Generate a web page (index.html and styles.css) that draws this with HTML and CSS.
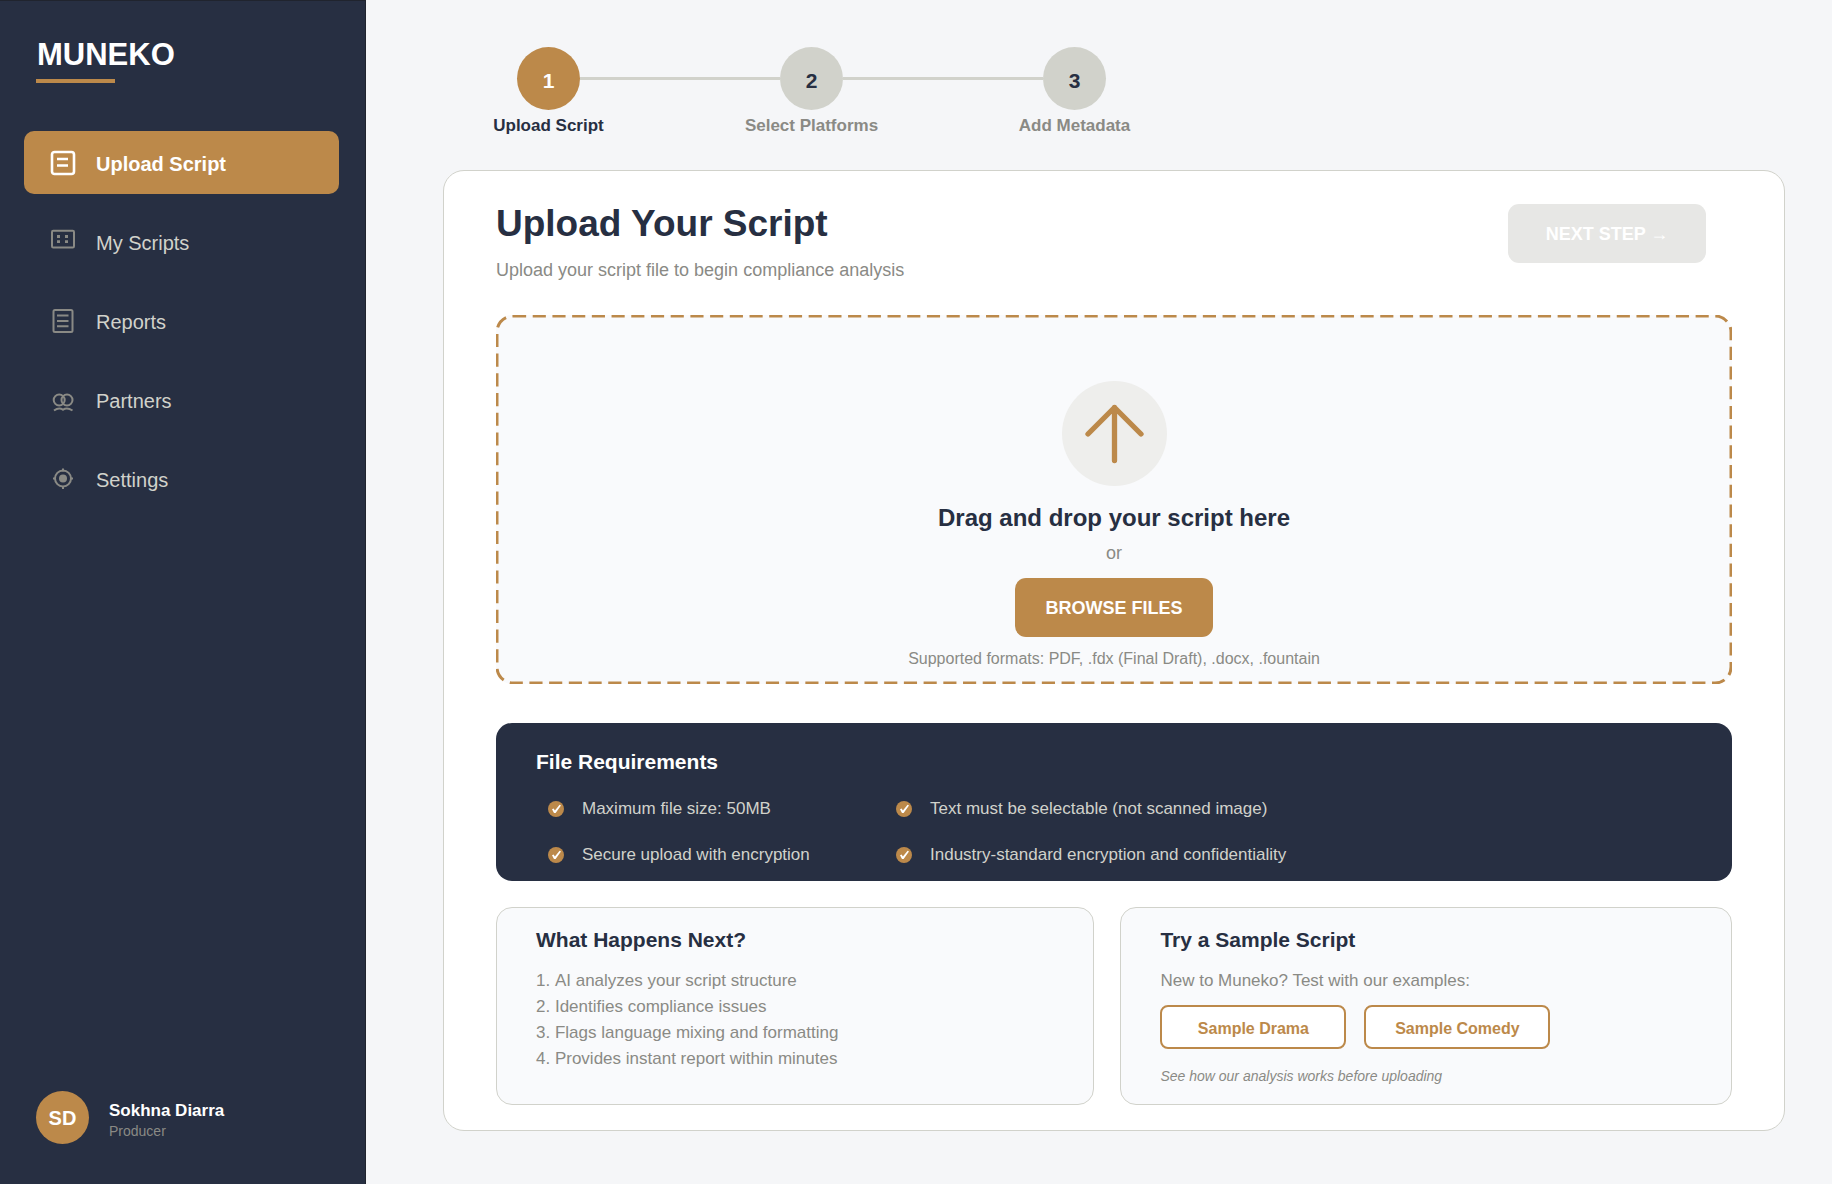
FILE: index.html
```html
<!DOCTYPE html>
<html lang="en">
<head>
<meta charset="utf-8">
<meta name="viewport" content="width=device-width, initial-scale=1">
<title>Muneko – Upload Script</title>
<link rel="stylesheet" href="styles.css">
</head>
<body>
<svg class="sprite" aria-hidden="true">
  <symbol id="check" viewBox="0 0 16 16">
    <circle cx="8" cy="8" r="8" fill="#bc894a"/>
    <path d="M4 8.200 6 12H7.600L13 4.400 11.600 3.800 6.900 9.600 5.600 7.600Z" fill="#fff"/>
  </symbol>
</svg>
<div class="app">
  <aside class="sidebar">
    <div class="brand">MUNEKO</div>
    <nav class="nav" aria-label="Main">
      <a class="nav-item active" href="#" aria-current="page">
        <svg class="nav-icon" viewBox="0 0 26 26"><rect x="2" y="2" width="22" height="22" rx="2.5" stroke-width="2.6"/><path d="M7 9h11M7 15.500h11" stroke-width="2.6"/></svg>
        <span>Upload Script</span>
      </a>
      <a class="nav-item" href="#">
        <svg class="nav-icon" viewBox="0 0 26 26"><rect x="2" y="1.700" width="22" height="16.800" rx="1.200"/><path d="M7 7.500h3M15 7.500h3M7 12.700h3M15 12.700h3" stroke-width="2.800"/></svg>
        <span>My Scripts</span>
      </a>
      <a class="nav-item" href="#">
        <svg class="nav-icon" viewBox="0 0 26 26"><rect x="3.500" y="2" width="19" height="22" rx="1.500"/><path d="M7 7.500h11.500M7 13h11.500M7 18.200h11.500"/></svg>
        <span>Reports</span>
      </a>
      <a class="nav-item" href="#">
        <svg class="nav-icon" viewBox="0 0 26 26"><circle cx="9.200" cy="13" r="5.500"/><circle cx="17" cy="13" r="5.500"/><path d="M4 23.500Q9 20 13 22.800 17 20 22.500 23.500"/></svg>
        <span>Partners</span>
      </a>
      <a class="nav-item" href="#">
        <svg class="nav-icon" viewBox="0 0 26 26"><circle cx="13" cy="12.500" r="8"/><circle cx="13" cy="12.500" r="4" class="solid"/><path d="M13 2.500v3M13 20v3M3 12.500h3M20 12.500h3"/></svg>
        <span>Settings</span>
      </a>
    </nav>
    <div class="user">
      <div class="avatar">SD</div>
      <div class="user-text">
        <div class="user-name">Sokhna Diarra</div>
        <div class="user-role">Producer</div>
      </div>
    </div>
  </aside>

  <main class="main">
    <ol class="steps">
      <li class="step current" aria-current="step"><span class="step-number">1</span><span class="step-label">Upload Script</span></li>
      <li class="step"><span class="step-number">2</span><span class="step-label">Select Platforms</span></li>
      <li class="step"><span class="step-number">3</span><span class="step-label">Add Metadata</span></li>
    </ol>

    <section class="card">
      <header class="card-head">
        <div>
          <h1>Upload Your Script</h1>
          <p class="subtitle">Upload your script file to begin compliance analysis</p>
        </div>
        <button class="button button-next" type="button" disabled>NEXT STEP →</button>
      </header>

      <div class="dropzone">
        <svg class="dropzone-outline" aria-hidden="true"><rect x="1" y="1" rx="16" stroke-dasharray="13.14 6.57"/></svg>
        <svg class="upload-icon" viewBox="0 0 105 105" aria-hidden="true"><circle cx="52.500" cy="52.500" r="52.500" fill="#eeeeec"/><path d="M52.500 79.500V26.500M26 53 52.500 26.500 79 53" fill="none" stroke="#bc894a" stroke-width="5.300" stroke-linecap="round" stroke-linejoin="round"/></svg>
        <h2 class="drop-title">Drag and drop your script here</h2>
        <p class="drop-or">or</p>
        <button class="button button-browse" type="button">BROWSE FILES</button>
        <p class="formats">Supported formats: PDF, .fdx (Final Draft), .docx, .fountain</p>
      </div>

      <section class="requirements">
        <h3>File Requirements</h3>
        <ul class="checks">
          <li><svg class="check" aria-hidden="true"><use href="#check"/></svg>Maximum file size: 50MB</li>
          <li><svg class="check" aria-hidden="true"><use href="#check"/></svg>Text must be selectable (not scanned image)</li>
          <li><svg class="check" aria-hidden="true"><use href="#check"/></svg>Secure upload with encryption</li>
          <li><svg class="check" aria-hidden="true"><use href="#check"/></svg>Industry-standard encryption and confidentiality</li>
        </ul>
      </section>

      <div class="panels">
        <section class="panel">
          <h3>What Happens Next?</h3>
          <ol class="next-list">
            <li>AI analyzes your script structure</li>
            <li>Identifies compliance issues</li>
            <li>Flags language mixing and formatting</li>
            <li>Provides instant report within minutes</li>
          </ol>
        </section>
        <section class="panel">
          <h3>Try a Sample Script</h3>
          <p class="panel-text">New to Muneko? Test with our examples:</p>
          <div class="samples">
            <button class="button-sample" type="button">Sample Drama</button>
            <button class="button-sample" type="button">Sample Comedy</button>
          </div>
          <p class="note">See how our analysis works before uploading</p>
        </section>
      </div>
    </section>
  </main>
</div>
</body>
</html>
```
FILE: styles.css
```css
:root {
  --navy: #272f42;
  --gold: #bc894a;
  --stone: #d1d2cb;
  --gray: #8a8a85;
  --page: #f5f6f8;
  --panel: #f9fafc;
}

* {
  box-sizing: border-box;
}

body {
  margin: 0;
  background: var(--page);
  color: var(--navy);
  font-family: "Liberation Sans", Arial, sans-serif;
}

h1,
h2,
h3,
p,
ul,
ol {
  margin: 0;
  padding: 0;
}

button {
  font-family: inherit;
}

.sprite {
  display: none;
}

.app {
  display: grid;
  grid-template-columns: 366px 1fr;
  min-height: 100vh;
}

/* Sidebar */
.sidebar {
  display: flex;
  flex-direction: column;
  padding: 35px 26px 40px 24px;
  border-top: 1px solid #20242e;
  border-right: 1px solid #20242e;
  background: var(--navy);
}

.brand {
  width: 79px;
  margin-left: 12px;
  padding-bottom: 5px;
  border-bottom: 4px solid var(--gold);
  color: #fff;
  font-size: 31px;
  font-weight: bold;
  line-height: 38px;
  text-indent: 1px;
}

.nav {
  display: grid;
  gap: 16px;
  margin-top: 48px;
}

.nav-item {
  display: flex;
  align-items: center;
  gap: 20px;
  height: 63px;
  padding: 4px 26px 0;
  border-radius: 10px;
  color: var(--stone);
  font-size: 20px;
  text-decoration: none;
}

.nav-item.active {
  background: var(--gold);
  color: #fff;
  font-weight: bold;
}

.nav-icon {
  width: 26px;
  height: 26px;
  margin-bottom: 3px;
  fill: none;
  stroke: var(--gray);
  stroke-width: 2;
}

.nav-icon .solid {
  fill: var(--gray);
  stroke: none;
}

.active .nav-icon {
  stroke: #fff;
}

.user {
  display: flex;
  align-items: center;
  gap: 20px;
  margin-top: auto;
  padding-left: 12px;
}

.avatar {
  display: grid;
  place-items: center;
  width: 53px;
  height: 53px;
  padding-top: 2px;
  border-radius: 50%;
  background: var(--gold);
  color: #fff;
  font-size: 20px;
  font-weight: bold;
}

.user-text {
  padding-top: 5px;
}

.user-name {
  color: #fff;
  font-size: 17px;
  font-weight: bold;
  line-height: 22px;
}

.user-role {
  color: var(--gray);
  font-size: 14px;
  line-height: 18px;
}

/* Main column */
.main {
  padding: 47px 47px 48px 77px;
}

.steps {
  display: flex;
  gap: 104px;
  margin-left: 26px;
  list-style: none;
}

.step {
  position: relative;
  display: flex;
  flex-direction: column;
  align-items: center;
  width: 159px;
  color: var(--gray);
  font-size: 17px;
  font-weight: bold;
  line-height: 20px;
}

.step-number {
  display: grid;
  place-items: center;
  width: 63px;
  height: 63px;
  margin-bottom: 6px;
  padding-top: 4px;
  border-radius: 50%;
  background: var(--stone);
  color: var(--navy);
  font-size: 21px;
}

.step + .step::before {
  content: "";
  position: absolute;
  top: 30px;
  right: 111px;
  width: 200px;
  height: 3px;
  background: var(--stone);
}

.step.current {
  color: var(--navy);
}

.current .step-number {
  background: var(--gold);
  color: #fff;
}

.card {
  display: grid;
  margin-top: 34px;
  padding: 32px 52px 25px;
  border: 1px solid var(--stone);
  border-radius: 21px;
  background: #fff;
}

.card-head {
  display: flex;
  align-items: flex-start;
  justify-content: space-between;
  padding-right: 26px;
}

h1 {
  font-size: 37px;
  line-height: 42px;
}

.subtitle {
  margin-top: 13px;
  color: var(--gray);
  font-size: 18px;
  line-height: 24px;
}

.button {
  width: 198px;
  height: 59px;
  padding: 2px 0 0;
  border: 0;
  border-radius: 11px;
  background: var(--gold);
  color: #fff;
  font-size: 18px;
  font-weight: bold;
}

.button-next {
  margin-top: 1px;
  background: #e7e7e5;
}

/* Drop zone */
.dropzone {
  position: relative;
  display: flex;
  flex-direction: column;
  align-items: center;
  margin-top: 33px;
  padding: 66px 0 15px;
  border-radius: 16px;
  background: var(--panel);
}

.dropzone-outline {
  position: absolute;
  inset: 0;
  width: 100%;
  height: 100%;
}

.dropzone-outline rect {
  width: calc(100% - 2px);
  height: calc(100% - 2px);
  fill: none;
  stroke: var(--gold);
  stroke-width: 3px;
}

.upload-icon {
  width: 105px;
  height: 105px;
}

.drop-title {
  margin-top: 18px;
  font-size: 24px;
  line-height: 28px;
}

.drop-or {
  margin-top: 10px;
  color: var(--gray);
  font-size: 18px;
  line-height: 22px;
}

.button-browse {
  position: relative;
  margin-top: 14px;
}

.formats {
  margin-top: 12px;
  color: var(--gray);
  font-size: 16px;
  line-height: 20px;
}

/* Requirements */
h3 {
  font-size: 21px;
  line-height: 24px;
}

.requirements {
  margin-top: 39px;
  padding: 27px 40px 14px;
  border-radius: 16px;
  background: var(--navy);
  color: #fff;
}

.checks {
  display: grid;
  grid-template-columns: 348px 1fr;
  row-gap: 22px;
  margin-top: 23px;
  padding-left: 12px;
  color: var(--stone);
  font-size: 17px;
  line-height: 24px;
  list-style: none;
}

.checks li {
  display: flex;
  align-items: center;
  gap: 18px;
}

.check {
  width: 16px;
  height: 16px;
}

/* Bottom panels */
.panels {
  display: grid;
  grid-template-columns: 455fr 465fr;
  gap: 26px;
  margin-top: 26px;
}

.panel {
  padding: 20px 39px 18px;
  border: 1px solid var(--stone);
  border-radius: 16px;
  background: var(--panel);
}

.next-list {
  margin-top: 16px;
  color: var(--gray);
  font-size: 17px;
  line-height: 26px;
  list-style-position: inside;
}

.panel-text {
  margin-top: 16px;
  color: var(--gray);
  font-size: 17px;
  line-height: 26px;
}

.samples {
  display: flex;
  gap: 18px;
  margin-top: 11px;
}

.button-sample {
  width: 186px;
  height: 44px;
  padding: 4px 0 0;
  border: 2px solid var(--gold);
  border-radius: 8px;
  background: #fff;
  color: var(--gold);
  font-size: 16px;
  font-weight: bold;
}

.note {
  margin-top: 17px;
  color: var(--gray);
  font-size: 14px;
  font-style: italic;
  line-height: 20px;
}
```
